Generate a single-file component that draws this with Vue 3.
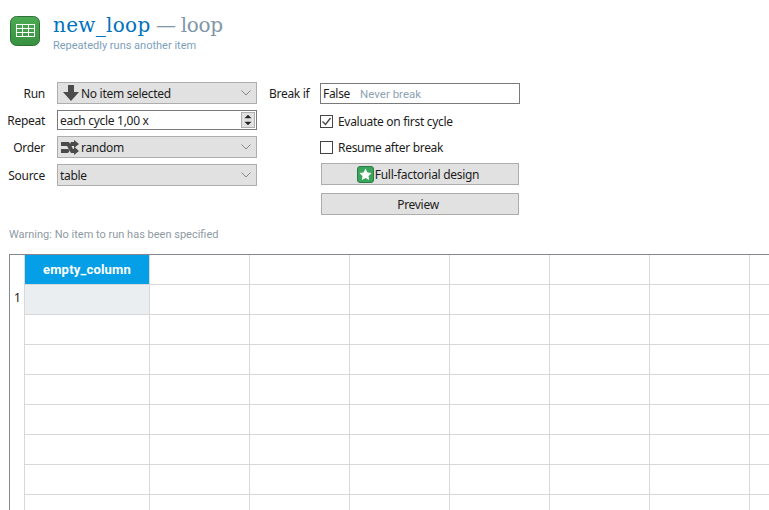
<script setup>
const tableRows = [1, 2, 3, 4, 5, 6, 7, 8]
const extraCols = [1, 2, 3, 4, 5, 6, 7]
</script>

<template>
  <div class="page">
    <header class="head">
      <svg class="logo" width="30" height="30" viewBox="0 0 30 30">
        <defs>
          <linearGradient id="logoFill" x1="0" y1="0" x2="0" y2="1">
            <stop offset="0" stop-color="#4cab53" />
            <stop offset="1" stop-color="#37913f" />
          </linearGradient>
        </defs>
        <rect x=".5" y=".5" width="29" height="29" rx="6" fill="url(#logoFill)" stroke="#2f6f38" />
        <g stroke="#fff" stroke-width="1" fill="none">
          <rect x="6.500" y="8.500" width="18" height="12" />
          <path d="M6.500 12.500h18M6.500 16.500h18M12.500 8.500v12M18.500 8.500v12" />
        </g>
      </svg>
      <div class="head-text">
        <h1 class="title"><span class="title-name">new_loop</span> <span class="title-type">— loop</span></h1>
        <p class="subtitle">Repeatedly runs another item</p>
      </div>
    </header>

    <section class="controls">
      <div class="form-col">
        <label class="lbl">Run</label>
        <div class="combo combo-run">
          <svg width="16" height="16" viewBox="0 0 16 16">
            <path d="M5 0h6v7h5l-8 9-8-9h5z" fill="#4b4b4b" />
          </svg>
          <span>No item selected</span>
          <svg class="chev" width="10" height="6" viewBox="0 0 10 6"><path d="M.5.5 5 5 9.500.5" /></svg>
        </div>

        <label class="lbl">Repeat</label>
        <div class="spin">
          <span>each cycle 1,00 x</span>
          <div class="spin-btns">
            <svg width="12" height="7" viewBox="0 0 10 6"><path d="M5 1.500 8 4.500H2z" fill="#222" /></svg>
            <svg width="12" height="7" viewBox="0 0 10 6"><path d="M5 4.500 2 1.500h6z" fill="#222" /></svg>
          </div>
        </div>

        <label class="lbl">Order</label>
        <div class="combo combo-order">
          <svg width="18" height="15" viewBox="0 0 18 15">
            <path d="M0 2h6.500v4H0zM0 9h6.500v4H0z" fill="#4b4b4b" />
            <path d="M6 2h2l4 7h1V6.500l5 4.500-5 4v-2h-3L6 6zM6 9l1.500 0 1 2L7 13H6zM9 4l1-2h3V0l5 4-5 4V6h-2l-1 1.500z" fill="#4b4b4b" />
          </svg>
          <span>random</span>
          <svg class="chev" width="10" height="6" viewBox="0 0 10 6"><path d="M.5.5 5 5 9.500.5" /></svg>
        </div>

        <label class="lbl">Source</label>
        <div class="combo">
          <span>table</span>
          <svg class="chev" width="10" height="6" viewBox="0 0 10 6"><path d="M.5.5 5 5 9.500.5" /></svg>
        </div>
      </div>

      <div class="side">
        <div class="side-row">
          <label class="lbl lbl-break">Break if</label>
          <div class="break-box">
            <span>False</span>
            <span class="placeholder">Never break</span>
          </div>
        </div>

        <div class="side-stack">
          <div class="check-row">
            <span class="check">
              <svg width="11" height="11" viewBox="0 0 11 11"><path d="M1.500 5.500 4.500 8.500 9.500 2" fill="none" stroke="#444" stroke-width="1.300" /></svg>
            </span>
            Evaluate on first cycle
          </div>
          <div class="check-row">
            <span class="check"></span>
            Resume after break
          </div>
          <button class="btn btn-first" type="button">
            <svg width="17" height="17" viewBox="0 0 17 17">
              <rect x=".5" y=".5" width="16" height="16" rx="2.500" fill="#3aa55c" stroke="#2b7b45" />
              <path d="M8.500 2.500l1.900 3.900 4.100.6-3 2.900.7 4.100-3.700-2-3.700 2 .7-4.100-3-2.900 4.100-.6z" fill="#fff" />
            </svg>
            Full-factorial design
          </button>
          <button class="btn btn-next" type="button">Preview</button>
        </div>
      </div>
    </section>

    <p class="warning">Warning: No item to run has been specified</p>

    <div class="table">
      <div class="row">
        <div class="num"></div>
        <div class="cell col-head">empty_column</div>
        <div v-for="c in extraCols" :key="c" class="cell"></div>
        <div class="cell last"></div>
      </div>
      <div v-for="r in tableRows" :key="r" class="row">
        <div class="num">{{ r === 1 ? r : '' }}</div>
        <div class="cell first" :class="{ selected: r === 1 }"></div>
        <div v-for="c in extraCols" :key="c" class="cell"></div>
        <div class="cell last"></div>
      </div>
    </div>
  </div>
</template>

<style>
html,
body {
  margin: 0;
  background: #fff;
  overflow: hidden;
}
</style>

<style scoped>
.page {
  width: 769px;
  height: 510px;
  overflow: hidden;
  font-family: "Noto Sans", sans-serif;
  font-size: 12px;
  letter-spacing: -.3px;
  color: #1c1c1c;
}

.head {
  display: flex;
  align-items: flex-start;
  gap: 13px;
  padding: 16px 0 0 10px;
  height: 68px;
  box-sizing: border-box;
}

.logo {
  flex: none;
}

.head-text {
  margin-top: -3px;
}

.title {
  margin: 0;
  font-family: "DejaVu Serif", serif;
  font-size: 20px;
  line-height: 24px;
  font-weight: 400;
  letter-spacing: 0;
  word-spacing: -1px;
  color: #0072bc;
}

.title-name {
  letter-spacing: .3px;
}

.title-type {
  color: #7f97a8;
  letter-spacing: -.3px;
}

.subtitle {
  margin: 2px 0 0;
  font-family: Roboto, sans-serif;
  font-size: 11px;
  line-height: 14px;
  letter-spacing: 0;
  color: #7d9fbb;
}

.controls {
  display: flex;
  align-items: flex-start;
  padding-top: 14px;
}

.form-col {
  display: grid;
  grid-template-columns: 45px 200px;
  column-gap: 12px;
  row-gap: 6px;
  align-items: center;
}

.side {
  margin: 1px 0 0 12px;
}

.side-row {
  display: flex;
  align-items: center;
  gap: 11px;
}

.side-stack {
  display: flex;
  flex-direction: column;
  align-items: flex-start;
  padding: 4px 0 0 51px;
}

.lbl {
  text-align: right;
}

.lbl-break {
  width: 40px;
  white-space: nowrap;
}

.combo {
  display: flex;
  align-items: center;
  gap: 3px;
  height: 22px;
  box-sizing: border-box;
  padding: 0 3px 0 2px;
  background: #e1e1e1;
  border: 1px solid #adadad;
}

.combo-run {
  gap: 2px;
  padding-left: 5px;
}

.combo-order {
  gap: 2px;
  padding-left: 3px;
}

.chev {
  margin-left: auto;
  margin-right: 2px;
  fill: none;
  stroke: #888;
}

.spin {
  display: flex;
  align-items: center;
  justify-content: space-between;
  height: 20px;
  box-sizing: border-box;
  padding-left: 2px;
  background: #fff;
  border: 1px solid #7a7a7a;
}

.spin-btns {
  display: flex;
  flex-direction: column;
  justify-content: center;
  width: 14px;
  height: 16px;
  margin-right: 1px;
  background: #e1e1e1;
  border: 1px solid #adadad;
  box-sizing: border-box;
  line-height: 0;
}

.break-box {
  display: flex;
  align-items: center;
  gap: 10px;
  width: 200px;
  height: 21px;
  box-sizing: border-box;
  padding-left: 2px;
  border: 1px solid #7a7a7a;
}

.placeholder {
  font-family: Roboto, sans-serif;
  color: #8ea2b2;
  font-size: 11.500px;
  letter-spacing: 0;
}

.check-row {
  display: flex;
  align-items: center;
  gap: 5px;
  height: 26px;
}

.check {
  display: flex;
  align-items: center;
  justify-content: center;
  width: 13px;
  height: 13px;
  box-sizing: border-box;
  border: 1px solid #444;
  background: #fff;
}

.btn {
  display: flex;
  align-items: center;
  justify-content: center;
  gap: 1px;
  width: 198px;
  height: 22px;
  padding: 0 4px 0 0;
  box-sizing: border-box;
  background: #e1e1e1;
  border: 1px solid #adadad;
  font: inherit;
  letter-spacing: inherit;
  color: inherit;
}

.btn-first {
  margin: 3px 0 0 1px;
}

.btn-next {
  margin: 8px 0 0 1px;
}

.warning {
  margin: 12px 0 0 9px;
  height: 16px;
  line-height: 16px;
  font-family: Roboto, sans-serif;
  font-size: 11px;
  letter-spacing: 0;
  color: #8e9aa3;
}

.table {
  margin: 11px 0 0 9px;
  width: 760px;
  border-left: 1px solid #87878f;
  border-top: 1px solid #87878f;
  box-sizing: border-box;
}

.row {
  display: flex;
  height: 30px;
}

.num {
  width: 15px;
  box-sizing: border-box;
  border-right: 1px solid #d8d8d8;
  line-height: 26px;
  padding-left: 4px;
  flex: none;
}

.cell {
  width: 100px;
  flex: none;
  box-sizing: border-box;
  border-right: 1px solid #d8d8d8;
  border-bottom: 1px solid #d8d8d8;
}

.cell.first,
.col-head {
  width: 125px;
}

.cell.last {
  width: 19px;
  border-right: none;
}

.col-head {
  background: #049fe6;
  color: #fff;
  font-family: Roboto, sans-serif;
  font-size: 13px;
  font-weight: 700;
  letter-spacing: .2px;
  text-align: center;
  line-height: 29px;
}

.selected {
  background: #ebeef0;
}
</style>
